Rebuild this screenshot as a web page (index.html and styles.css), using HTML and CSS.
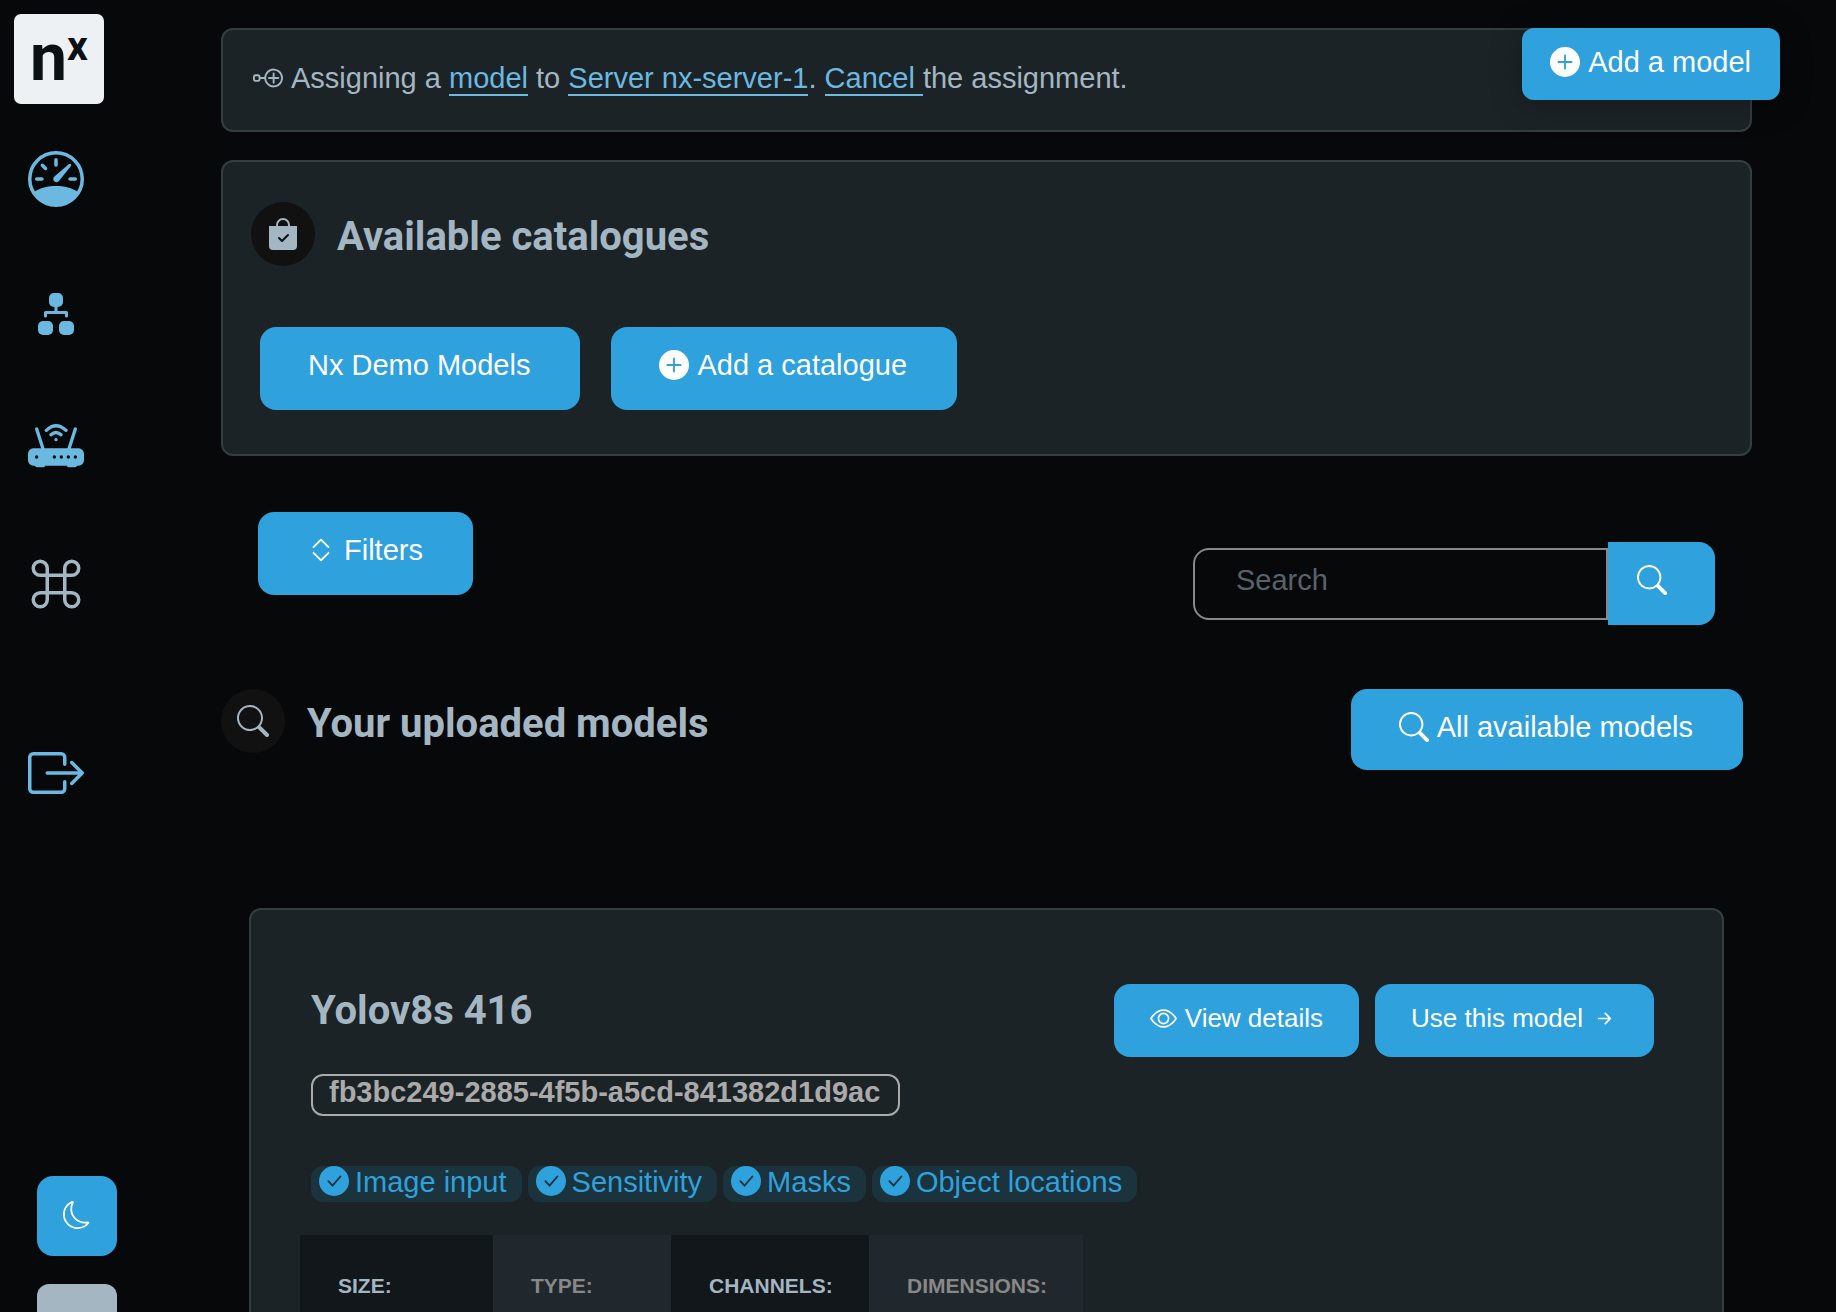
FILE: index.html
```html
<!DOCTYPE html>
<html lang="en">
<head>
<meta charset="utf-8">
<title>Models</title>
<link rel="stylesheet" href="styles.css">
</head>
<body>
<svg class="sprite" aria-hidden="true">
  <symbol id="plus-fill" viewBox="0 0 16 16"><path d="M16 8A8 8 0 1 1 0 8a8 8 0 0 1 16 0zM8.500 4.500a.5.5 0 0 0-1 0v3h-3a.5.5 0 0 0 0 1h3v3a.5.5 0 0 0 1 0v-3h3a.5.5 0 0 0 0-1h-3v-3z"/></symbol>
  <symbol id="search" viewBox="0 0 16 16"><path d="M11.742 10.344a6.500 6.500 0 1 0-1.397 1.398h-.001c.03.04.062.078.098.115l3.850 3.850a1 1 0 0 0 1.415-1.414l-3.850-3.850a1.007 1.007 0 0 0-.115-.1zM12 6.500a5.500 5.500 0 1 1-11 0 5.500 5.500 0 0 1 11 0z"/></symbol>
  <symbol id="check-fill" viewBox="0 0 16 16"><circle cx="8" cy="8" r="8"/><path d="M5 8.100 7.200 10.500 11.400 5.600" fill="none" stroke="#1b333d" stroke-width="1" stroke-linecap="round" stroke-linejoin="round"/></symbol>
</svg>
<div class="shell">
  <aside class="sidebar">
    <a class="logo" href="#" aria-label="Nx home"><span class="logo-n">n</span><span class="logo-x">x</span></a>
    <nav class="nav" aria-label="Main">
      <a href="#" aria-label="Dashboard"><svg class="nav-icon" viewBox="0 0 16 16"><circle cx="8" cy="8" r="7.500" fill="none" stroke="currentColor"/><path d="M8 2.500V4M2.500 8H4M12 8h1.500M4.100 4.100l.9.9" fill="none" stroke="currentColor" stroke-linecap="round"/><path d="M12.254 3.754a.389.389 0 0 0-.527-.02L7.547 7.310a.91.91 0 1 0 1.302 1.258l3.434-4.297a.389.389 0 0 0-.029-.518z"/><path d="M1.500 11.800C3.400 10.500 5.700 10 8 10s4.600.5 6.500 1.800A7.600 7.600 0 0 1 1.500 11.800z"/></svg></a>
      <a href="#" aria-label="Network"><svg class="nav-icon" viewBox="0 0 56 56"><rect x="21" y="7" width="14" height="14" rx="5"/><rect x="10" y="35" width="15" height="14" rx="5"/><rect x="31" y="35" width="15" height="14" rx="5"/><path d="M28 20v6M17.500 30v-3.500h21V30" fill="none" stroke="currentColor" stroke-width="3" stroke-linecap="round" stroke-linejoin="round"/></svg></a>
      <a href="#" aria-label="Devices"><svg class="nav-icon" viewBox="0 -8 168 168"><g fill="none" stroke="currentColor" stroke-width="10" stroke-linecap="round"><path d="M26 16 46 78M142 16l-20 62M55 20Q84-8 114 20M69 33q15-13 30 0"/></g><circle cx="84" cy="48" r="5"/><path fill-rule="evenodd" d="M16 74H152a16 16 0 0 1 16 16v20a16 16 0 0 1-16 16h-5q-2 5-7 5h-17q-5 0-7-5H52q-2 5-7 5H28q-5 0-7-5h-5a16 16 0 0 1-16-16V90a16 16 0 0 1 16-16zM21 100a5 5 0 1 0 10 0 5 5 0 0 0-10 0zM74 100a5 5 0 1 0 10 0 5 5 0 0 0-10 0zM95 100a5 5 0 1 0 10 0 5 5 0 0 0-10 0zM116 100a5 5 0 1 0 10 0 5 5 0 0 0-10 0zM137 100a5 5 0 1 0 10 0 5 5 0 0 0-10 0z"/></svg></a>
      <a class="current" href="#" aria-label="Models" aria-current="page"><svg class="nav-icon" viewBox="0 0 16 16"><path d="M3.500 2A1.500 1.500 0 0 1 5 3.500V5H3.500a1.500 1.500 0 1 1 0-3zM6 5V3.500A2.500 2.500 0 1 0 3.500 6H5v4H3.500A2.500 2.500 0 1 0 6 12.500V11h4v1.500a2.500 2.500 0 1 0 2.500-2.500H11V6h1.500A2.500 2.500 0 1 0 10 3.500V5H6zm4 1v4H6V6h4zm1-1V3.500A1.500 1.500 0 1 1 12.500 5H11zm0 6h1.500a1.500 1.500 0 1 1-1.500 1.500V11zm-6 0v1.500A1.500 1.500 0 1 1 3.500 11H5z"/></svg></a>
      <a class="sign-out" href="#" aria-label="Sign out"><svg class="nav-icon" viewBox="0 0 16 16"><path d="M10 12.500a.5.5 0 0 1-.5.5h-8a.5.5 0 0 1-.5-.5v-9a.5.5 0 0 1 .5-.5h8a.5.5 0 0 1 .5.5v2a.5.5 0 0 0 1 0v-2A1.500 1.500 0 0 0 9.500 2h-8A1.500 1.500 0 0 0 0 3.500v9A1.500 1.500 0 0 0 1.500 14h8a1.500 1.500 0 0 0 1.500-1.500v-2a.5.5 0 0 0-1 0v2z"/><path d="M15.854 8.354a.5.5 0 0 0 0-.708l-3-3a.5.5 0 0 0-.708.708L14.293 7.500H5.500a.5.5 0 0 0 0 1h8.793l-2.147 2.146a.5.5 0 0 0 .708.708l3-3z"/></svg></a>
    </nav>
    <div class="side-buttons">
      <button class="side-button" type="button" aria-label="Dark mode"><svg viewBox="0 0 16 16"><path d="M6 .278a.768.768 0 0 1 .08.858 7.208 7.208 0 0 0-.878 3.460c0 4.021 3.278 7.277 7.318 7.277.527 0 1.040-.055 1.533-.16a.787.787 0 0 1 .81.316.733.733 0 0 1-.031.893A8.349 8.349 0 0 1 8.344 16C3.734 16 0 12.286 0 7.710 0 4.266 2.114 1.312 5.124.06A.752.752 0 0 1 6 .278zM4.858 1.311A7.269 7.269 0 0 0 1.025 7.710c0 4.020 3.279 7.276 7.319 7.276a7.316 7.316 0 0 0 5.205-2.162c-.337.042-.68.063-1.029.063-4.610 0-8.343-3.714-8.343-8.290 0-1.167.242-2.278.681-3.286z"/></svg></button>
      <button class="side-button muted" type="button" aria-label="Help"></button>
    </div>
  </aside>

  <main class="main">
    <button class="button add-model" type="button"><svg class="icon"><use href="#plus-fill"/></svg>Add a model</button>

    <section class="card notice">
      <svg class="icon" viewBox="0 0 16 16"><path d="M11 4a4 4 0 1 0 0 8 4 4 0 0 0 0-8zM6.025 7.500a5 5 0 1 1 0 1H4A1.500 1.500 0 0 1 2.500 10h-1A1.500 1.500 0 0 1 0 8.500v-1A1.500 1.500 0 0 1 1.500 6h1A1.500 1.500 0 0 1 4 7.500h2.025zM11 5a.5.5 0 0 1 .5.5v2h2a.5.5 0 0 1 0 1h-2v2a.5.5 0 0 1-1 0v-2h-2a.5.5 0 0 1 0-1h2v-2A.5.5 0 0 1 11 5zM1.500 7a.5.5 0 0 0-.5.5v1a.5.5 0 0 0 .5.5h1a.5.5 0 0 0 .5-.5v-1a.5.5 0 0 0-.5-.5h-1z"/></svg>
      <p>Assigning a <a href="#">model</a> to <a href="#">Server nx-server-1</a>. <a class="cancel" href="#">Cancel </a>the assignment.</p>
    </section>

    <section class="card catalogues">
      <div class="heading">
        <span class="disc"><svg viewBox="0 0 16 16"><path fill-rule="evenodd" d="M10.500 3.500a2.500 2.500 0 0 0-5 0V4h5v-.5zm1 0V4H15v10a2 2 0 0 1-2 2H3a2 2 0 0 1-2-2V4h3.500v-.5a3.500 3.500 0 1 1 7 0zm-.646 5.354a.5.5 0 0 0-.708-.708L7.500 10.793 6.354 9.646a.5.5 0 1 0-.708.708l1.500 1.500a.5.5 0 0 0 .708 0l3-3z"/></svg></span>
        <h2>Available catalogues</h2>
      </div>
      <div class="catalogue-buttons">
        <button class="button" type="button">Nx Demo Models</button>
        <button class="button" type="button"><svg class="icon"><use href="#plus-fill"/></svg>Add a catalogue</button>
      </div>
    </section>

    <div class="toolbar">
      <button class="button" type="button"><svg class="icon" viewBox="0 0 16 16"><path d="M3.646 9.146a.5.5 0 0 1 .708 0L8 12.793l3.646-3.647a.5.5 0 0 1 .708.708l-4 4a.5.5 0 0 1-.708 0l-4-4a.5.5 0 0 1 0-.708zm0-2.292a.5.5 0 0 0 .708 0L8 3.207l3.646 3.647a.5.5 0 0 0 .708-.708l-4-4a.5.5 0 0 0-.708 0l-4 4a.5.5 0 0 0 0 .708z"/></svg>Filters</button>
      <form class="search" role="search">
        <input type="text" placeholder="Search" aria-label="Search">
        <button class="button search-button" type="button" aria-label="Search"><svg class="icon"><use href="#search"/></svg></button>
      </form>
    </div>

    <div class="uploaded">
      <div class="heading">
        <span class="disc"><svg><use href="#search"/></svg></span>
        <h2>Your uploaded models</h2>
      </div>
      <button class="button all-models" type="button"><svg class="icon"><use href="#search"/></svg>All available models</button>
    </div>

    <article class="card model">
      <header class="model-head">
        <h2>Yolov8s 416</h2>
        <div class="model-actions">
          <button class="button small" type="button"><svg class="icon" viewBox="0 0 16 16"><path d="M16 8s-3-5.500-8-5.500S0 8 0 8s3 5.500 8 5.500S16 8 16 8zM1.173 8a13.133 13.133 0 0 1 1.660-2.043C4.120 4.668 5.880 3.500 8 3.500c2.120 0 3.879 1.168 5.168 2.457A13.133 13.133 0 0 1 14.828 8c-.058.087-.122.183-.195.288-.335.480-.830 1.120-1.465 1.755C11.879 11.332 10.119 12.500 8 12.500c-2.120 0-3.879-1.168-5.168-2.457A13.134 13.134 0 0 1 1.172 8z"/><path d="M8 5.500a2.500 2.500 0 1 0 0 5 2.500 2.500 0 0 0 0-5zM4.500 8a3.500 3.500 0 1 1 7 0 3.500 3.500 0 0 1-7 0z"/></svg>View details</button>
          <button class="button small" type="button">Use this model<svg class="icon" viewBox="0 0 16 16"><path d="M4 8a.5.5 0 0 1 .5-.5h5.793L8.146 5.354a.5.5 0 1 1 .708-.708l3 3a.5.5 0 0 1 0 .708l-3 3a.5.5 0 0 1-.708-.708L10.293 8.500H4.500A.5.5 0 0 1 4 8z"/></svg></button>
        </div>
      </header>
      <div class="uuid">fb3bc249-2885-4f5b-a5cd-841382d1d9ac</div>
      <ul class="tags">
        <li><svg class="icon"><use href="#check-fill"/></svg>Image input</li>
        <li><svg class="icon"><use href="#check-fill"/></svg>Sensitivity</li>
        <li><svg class="icon"><use href="#check-fill"/></svg>Masks</li>
        <li><svg class="icon"><use href="#check-fill"/></svg>Object locations</li>
      </ul>
      <table class="specs">
        <thead>
          <tr><th class="col-size" scope="col">SIZE:</th><th class="col-type" scope="col">TYPE:</th><th class="col-channels" scope="col">CHANNELS:</th><th class="col-dimensions" scope="col">DIMENSIONS:</th></tr>
        </thead>
      </table>
    </article>
  </main>
</div>
</body>
</html>
```
FILE: styles.css
```css
:root {
  --bg: #060809;
  --card: #1c2326;
  --line: #353d40;
  --blue: #2fa1dc;
  --link: #6bb9e0;
  --text: #a3b6c2;
}

* { box-sizing: border-box; }

body {
  margin: 0;
  background: var(--bg);
  color: var(--text);
  font: 29px/36px "Liberation Sans", Arial, sans-serif;
}

h2, p, ul { margin: 0; padding: 0; }

h2 {
  font: 700 40px/48px Roboto, sans-serif;
}

svg { fill: currentColor; flex: none; }
.sprite { display: none; }
.icon { width: 30px; height: 30px; }

.shell {
  display: flex;
  height: 100vh;
  overflow: hidden;
}

/* Sidebar */
.sidebar {
  flex: none;
  width: 221px;
  padding: 14px;
}

.logo {
  display: flex;
  justify-content: center;
  width: 90px;
  height: 90px;
  border-radius: 7px;
  background: #edf1f4;
  color: #0b1013;
  font-family: Roboto, sans-serif;
  font-weight: 700;
  text-decoration: none;
}
.logo-n { font-size: 66px; line-height: 88px; }
.logo-x { font-size: 41px; line-height: 64px; }

.nav {
  display: flex;
  flex-direction: column;
  gap: 79px;
  padding: 47px 14px 0;
}
.nav a { height: 56px; color: var(--link); }
.nav .current { color: var(--text); }
.nav .sign-out { margin-top: 54px; }
.nav-icon { display: block; width: 56px; height: 56px; }

.side-buttons {
  display: flex;
  flex-direction: column;
  gap: 28px;
  margin-top: 375px;
  padding-left: 23px;
}
.side-button {
  width: 80px;
  height: 80px;
  padding: 0 0 2px 26px;
  border: 0;
  border-radius: 16px;
  background: var(--blue);
  color: #fff;
}
.side-button svg { display: block; width: 28px; height: 28px; }
.side-button.muted { background: var(--text); border-radius: 12px; }

/* Main column */
.main {
  position: relative;
  flex: 1;
  min-width: 0;
  padding: 28px 84px 0 0;
  overflow-y: auto;
  scrollbar-width: none;
}

.button {
  display: flex;
  align-items: center;
  gap: 8px;
  padding: 20px 50px 27px 48px;
  border: 0;
  border-radius: 16px;
  background: var(--blue);
  color: #fff;
  font: inherit;
  white-space: nowrap;
}

.add-model {
  position: absolute;
  top: 28px;
  right: 56px;
  padding: 16px 29px 20px 28px;
  border-radius: 12px;
  box-shadow: 0 4px 32px rgba(0, 0, 0, .3);
}

.card {
  border: 2px solid var(--line);
  border-radius: 12px;
  background: var(--card);
}

.notice {
  display: flex;
  align-items: center;
  gap: 8px;
  padding: 30px 28px 34px 30px;
}
.notice a {
  border-bottom: 2px solid var(--link);
  color: var(--link);
  text-decoration: none;
}
.notice .cancel { white-space: pre; }

.catalogues {
  margin-top: 28px;
  padding: 40px 28px 44px;
}

.heading {
  display: flex;
  align-items: center;
  gap: 22px;
}
.heading h2 { padding-top: 6px; }
.disc {
  display: grid;
  place-items: center;
  width: 64px;
  height: 64px;
  border-radius: 50%;
  background: #111;
}
.disc svg { width: 32px; height: 32px; }

.catalogue-buttons {
  display: flex;
  gap: 31px;
  margin: 61px 0 0 9px;
}

.toolbar {
  display: flex;
  justify-content: space-between;
  align-items: flex-start;
  margin: 56px 37px 0;
}
.search {
  display: flex;
  align-items: center;
  margin-top: 30px;
}
.search input {
  width: 415px;
  height: 72px;
  padding: 0 41px 6px;
  border: 2px solid #888;
  border-radius: 16px 0 0 16px;
  background: transparent;
  color: var(--text);
  font: inherit;
}
.search input::placeholder { color: #56636b; opacity: 1; }
.search-button {
  height: 83px;
  padding: 20px 48px 27px 29px;
  border-radius: 0 16px 16px 0;
}

.uploaded {
  display: flex;
  justify-content: space-between;
  align-items: flex-start;
  margin: 64px 9px 0 0;
}
.all-models { padding-bottom: 25px; }

/* Model card */
.model {
  margin: 138px 28px 0;
  padding: 74px 68px 60px 60px;
}
.model-head {
  display: flex;
  justify-content: space-between;
  align-items: flex-start;
}
.model-head h2 { padding-top: 3px; }
.model-actions { display: flex; gap: 16px; }
.small {
  padding: 18px 36px 23px;
  font-size: 26px;
  line-height: 32px;
}
.small .icon { width: 27px; height: 27px; }

.uuid {
  width: fit-content;
  margin-top: 17px;
  padding: 0 18px 6px 16px;
  border: 2px solid #aaa;
  border-radius: 12px;
  color: #aaa;
  font-weight: 700;
  line-height: 32px;
}

.tags {
  display: flex;
  gap: 6px;
  margin-top: 50px;
  list-style: none;
}
.tags li {
  display: flex;
  gap: 6px;
  padding: 0 15px 4px 8px;
  border-radius: 12px;
  background: #1b333d;
  color: var(--blue);
  line-height: 32px;
}

.specs {
  margin: 33px 0 0 -11px;
  border-collapse: collapse;
}
.specs th {
  padding: 39px 0 39px 38px;
  background: #12171b;
  font-size: 21px;
  line-height: 24px;
  text-align: left;
}
.specs th:nth-child(even) { background: #20272d; color: #888; }
.col-size { width: 193px; }
.col-type { width: 178px; }
.col-channels { width: 198px; }
.col-dimensions { width: 214px; }
```
